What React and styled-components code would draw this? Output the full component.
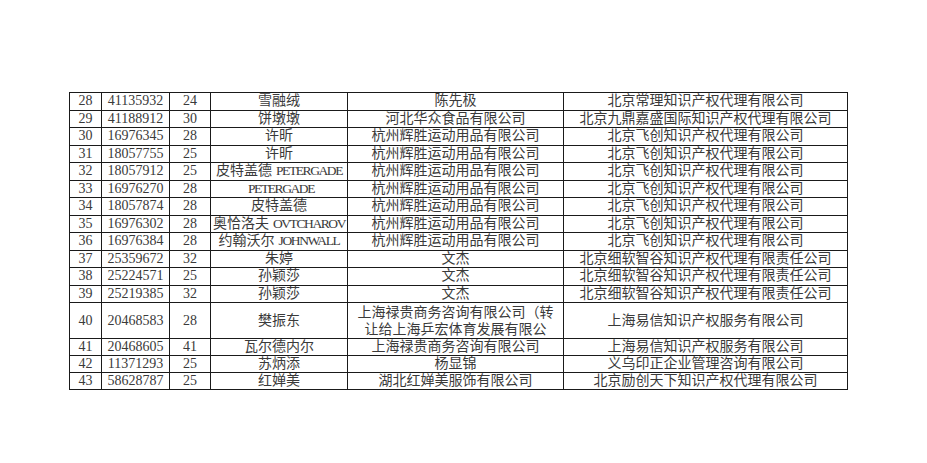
import React from "react";
import styled, { createGlobalStyle } from "styled-components";

const Global = createGlobalStyle`
  html, body { margin: 0; padding: 0; background: #ffffff; }
  body { width: 927px; height: 463px; overflow: hidden; }
`;

const Page = styled.div`
  padding: 92px 0 0 69px;
`;

const Table = styled.table`
  border-collapse: collapse;
  table-layout: fixed;
  width: 778px;
  border: 1.5px solid #1a1a1a;
  font-family: "Liberation Serif", "Noto Sans CJK SC", serif;
  font-size: 14px;
  color: #3a3a3a;
`;

const Row = styled.tr`
  height: ${(p) => p.$h || 17.5}px;
`;

const Cell = styled.td`
  border: 1px solid #1a1a1a;
  padding: 0;
  text-align: center;
  vertical-align: middle;
  line-height: ${(p) => (p.$multi ? "17px" : "16px")};
  white-space: nowrap;
  overflow: hidden;
`;

const Latin = styled.span`
  font-family: "Liberation Serif", serif;
  font-size: 13.5px;
  letter-spacing: -1.4px;
  margin-left: 4px;
`;

const widths = [32, 68, 41, 137, 216, 284];

const rows = [
  ["28", "41135932", "24", "雪融绒", "陈先极", "北京常理知识产权代理有限公司"],
  ["29", "41188912", "30", "饼墩墩", "河北华众食品有限公司", "北京九鼎嘉盛国际知识产权代理有限公司"],
  ["30", "16976345", "28", "许昕", "杭州辉胜运动用品有限公司", "北京飞创知识产权代理有限公司"],
  ["31", "18057755", "25", "许昕", "杭州辉胜运动用品有限公司", "北京飞创知识产权代理有限公司"],
  ["32", "18057912", "25", ["皮特盖德", "PETERGADE"], "杭州辉胜运动用品有限公司", "北京飞创知识产权代理有限公司"],
  ["33", "16976270", "28", ["", "PETERGADE"], "杭州辉胜运动用品有限公司", "北京飞创知识产权代理有限公司"],
  ["34", "18057874", "28", "皮特盖德", "杭州辉胜运动用品有限公司", "北京飞创知识产权代理有限公司"],
  ["35", "16976302", "28", ["奥恰洛夫", "OVTCHAROV"], "杭州辉胜运动用品有限公司", "北京飞创知识产权代理有限公司"],
  ["36", "16976384", "28", ["约翰沃尔", "JOHNWALL"], "杭州辉胜运动用品有限公司", "北京飞创知识产权代理有限公司"],
  ["37", "25359672", "32", "朱婷", "文杰", "北京细软智谷知识产权代理有限责任公司"],
  ["38", "25224571", "25", "孙颖莎", "文杰", "北京细软智谷知识产权代理有限责任公司"],
  ["39", "25219385", "32", "孙颖莎", "文杰", "北京细软智谷知识产权代理有限责任公司"],
  ["40", "20468583", "28", "樊振东", ["上海禄贵商务咨询有限公司（转", "让给上海乒宏体育发展有限公"], "上海易信知识产权服务有限公司", 36],
  ["41", "20468605", "41", "瓦尔德内尔", "上海禄贵商务咨询有限公司", "上海易信知识产权服务有限公司", 16.5],
  ["42", "11371293", "25", "苏炳添", "杨显锦", "义乌印正企业管理咨询有限公司", 17.2],
  ["43", "58628787", "25", "红婵美", "湖北红婵美服饰有限公司", "北京励创天下知识产权代理有限公司", 17.2],
];

export default function App() {
  return (
    <>
      <Global />
      <Page>
        <Table>
          <colgroup>
            {widths.map((w, i) => (
              <col key={i} style={{ width: w }} />
            ))}
          </colgroup>
          <tbody>
            {rows.map((r) => (
              <Row key={r[0]} $h={r[6]}>
                <Cell>{r[0]}</Cell>
                <Cell>{r[1]}</Cell>
                <Cell>{r[2]}</Cell>
                <Cell>
                  {Array.isArray(r[3]) ? (
                    <>
                      {r[3][0]}
                      <Latin>{r[3][1]}</Latin>
                    </>
                  ) : (
                    r[3]
                  )}
                </Cell>
                <Cell $multi={Array.isArray(r[4])}>
                  {Array.isArray(r[4]) ? (
                    <>
                      {r[4][0]}
                      <br />
                      {r[4][1]}
                    </>
                  ) : (
                    r[4]
                  )}
                </Cell>
                <Cell>{r[5]}</Cell>
              </Row>
            ))}
          </tbody>
        </Table>
      </Page>
    </>
  );
}
